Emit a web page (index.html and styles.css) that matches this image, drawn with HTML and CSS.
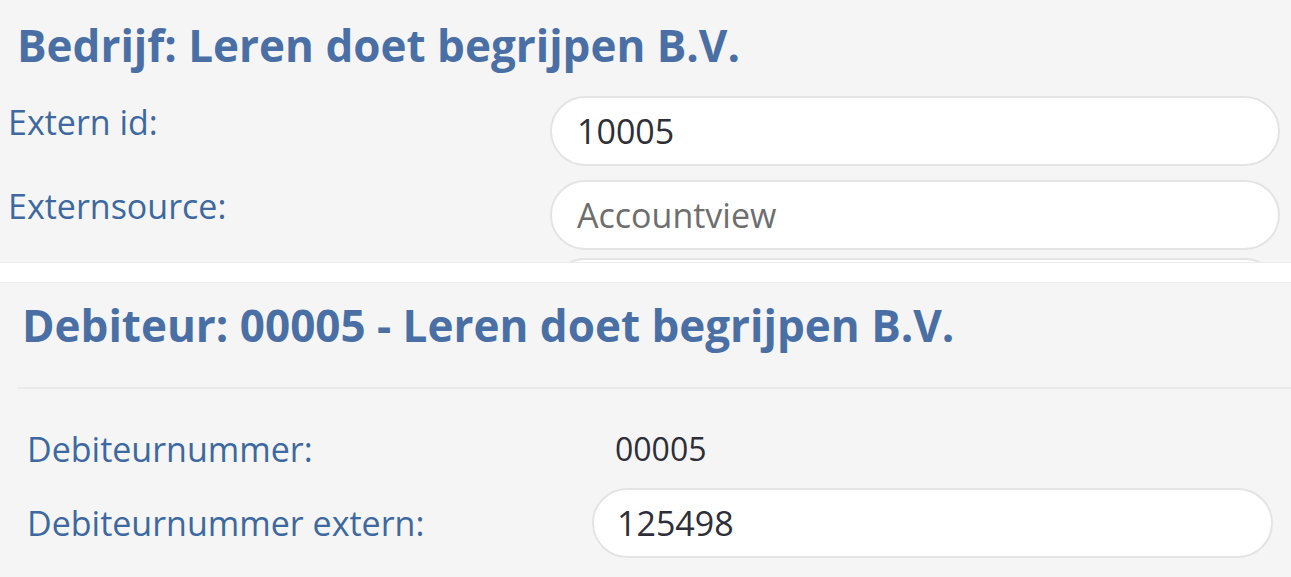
FILE: index.html
```html
<!DOCTYPE html>
<html lang="nl">
<head>
    <meta charset="UTF-8">
    <meta name="viewport" content="width=device-width, initial-scale=1.0">
    <title>Bedrijf en debiteur</title>
    <link rel="stylesheet" href="styles.css">
</head>
<body>
    <!-- bedrijfsgegevens -->
    <section class="panel panel-company">
        <h2 class="panel-title">Bedrijf: Leren doet begrijpen B.V.</h2>
        <div class="form-row">
            <label class="form-label">Extern id:</label>
            <div class="form-input">10005</div>
        </div>
        <div class="form-row">
            <label class="form-label">Externsource:</label>
            <div class="form-input muted">Accountview</div>
        </div>
        <div class="form-row cut">
            <label class="form-label"></label>
            <div class="form-input"></div>
        </div>
    </section>

    <div class="divider-strip"></div>

    <!-- debiteurgegevens -->
    <section class="panel panel-debtor">
        <h2 class="panel-title">Debiteur: 00005 - Leren doet begrijpen B.V.</h2>
        <hr class="panel-rule">
        <div class="form-row">
            <label class="form-label">Debiteurnummer:</label>
            <div class="form-value">00005</div>
        </div>
        <div class="form-row">
            <label class="form-label">Debiteurnummer extern:</label>
            <div class="form-input">125498</div>
        </div>
    </section>
</body>
</html>
```

FILE: styles.css
```css
:root {
    --panel-bg: #F5F5F5;
    --title-blue: #4A6FA5;
    --label-blue: #3D68A0;
    --text-dark: #2E2E38;
    --border: #E4E4E4;
}

html, body {
    margin: 0;
    padding: 0;
}

body {
    font-family: "Open Sans", "Liberation Sans", sans-serif;
    background-color: #FFFFFF;
    width: 1291px;
    height: 577px;
    overflow: hidden;
}

.panel {
    background-color: var(--panel-bg);
    overflow: hidden;
}

.panel-title {
    margin: 0;
    color: var(--title-blue);
    font-weight: 700;
    font-size: 44px;
    line-height: 1;
    white-space: nowrap;
}

.form-row {
    display: grid;
    align-items: start;
}

.form-label {
    color: var(--label-blue);
    font-size: 34px;
    line-height: 1;
    white-space: nowrap;
}

.form-input {
    height: 70px;
    box-sizing: border-box;
    background-color: #FFFFFF;
    border: 2px solid var(--border);
    border-radius: 36px;
    color: var(--text-dark);
    font-size: 34px;
    line-height: 66px;
}

.form-input.muted {
    color: #6E6E6E;
}

.form-value {
    color: var(--text-dark);
    font-size: 32px;
    line-height: 1;
}

/* bovenste schermafdruk */
.panel-company {
    height: 262px;
    padding: 0 11px 0 8px;
}

.panel-company .panel-title {
    padding: 23px 0 0 9px;
    height: 73px;
}

.panel-company .form-row {
    grid-template-columns: 542px 1fr;
    margin-bottom: 14px;
}

.panel-company .form-row.cut {
    margin-top: -6px;
}

.panel-company .form-label {
    padding-top: 9px;
}

.panel-company .form-input {
    padding-left: 25px;
}

.divider-strip {
    height: 21px;
    background-color: #FFFFFF;
    border-top: 1px solid #ECECEC;
    border-bottom: 1px solid #ECECEC;
    box-sizing: border-box;
}

/* onderste schermafdruk */
.panel-debtor {
    height: 294px;
    padding: 0 18px 0 27px;
}

.panel-debtor .panel-title {
    padding-top: 20px;
    margin-left: -5px;
}

.panel-rule {
    border: none;
    border-top: 2px solid #E8EAEC;
    margin: 40px -18px 25px -9px;
}

.panel-debtor .form-row {
    grid-template-columns: 565px 1fr;
    align-items: center;
    min-height: 70px;
    margin-bottom: 4px;
}

.panel-debtor .form-value {
    padding-left: 23px;
}

.panel-debtor .form-input {
    padding-left: 23px;
}
```
